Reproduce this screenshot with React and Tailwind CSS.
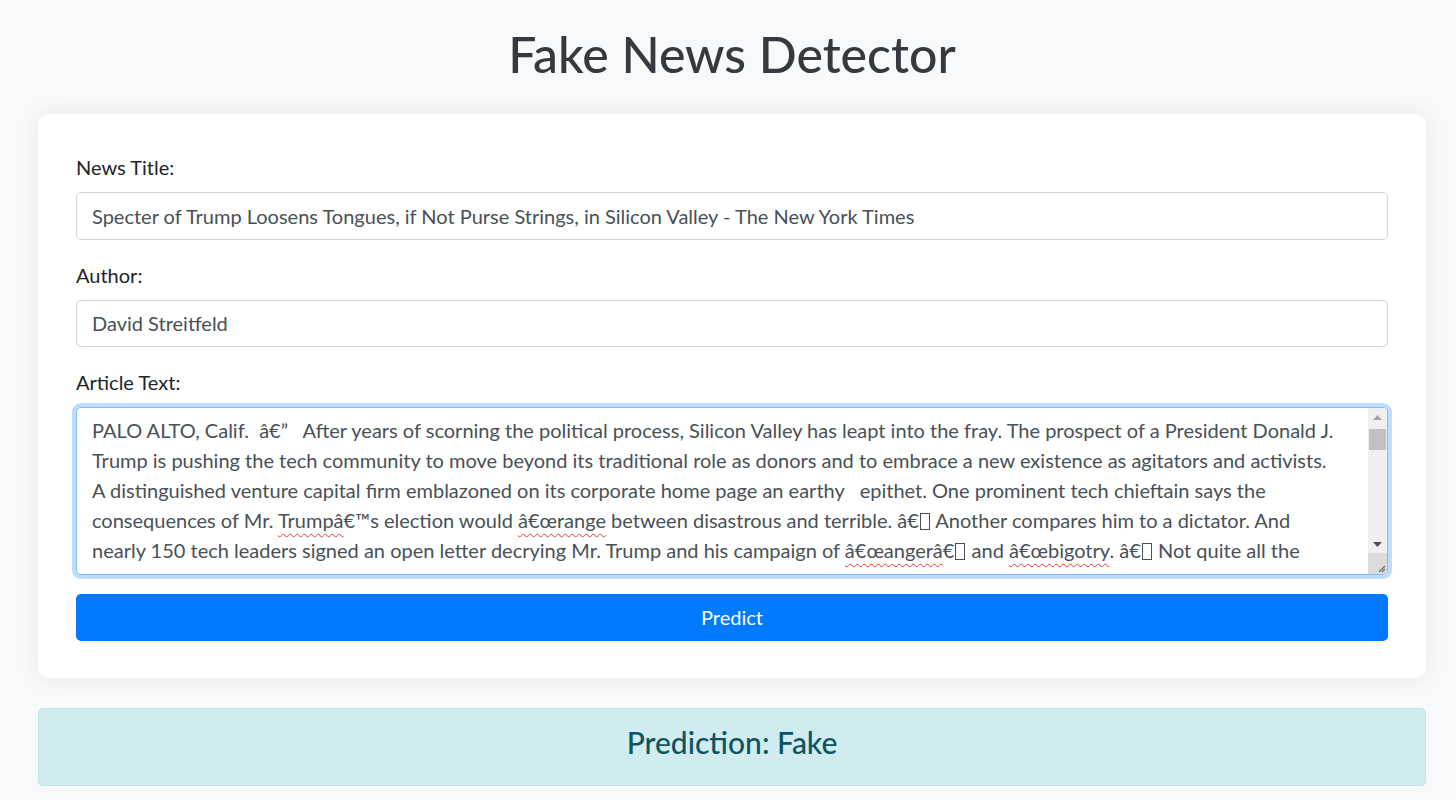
import React from "react";

const Squig = ({ children }) => (
  <span className="underline decoration-wavy decoration-[#e53935] decoration-1 underline-offset-[5px]">{children}</span>
);

const Tofu = () => (
  <span className="inline-block w-[10px] h-[17px] border border-[#495057] align-[-2px] mx-[1px]" />
);

export default function App() {
  return (
    <div className="min-h-screen bg-[#f8f9fa] pl-[38px] pr-[30px] pt-[24px] pb-[20px] text-[20px] text-[#212529] [font-family:Lato,'Open_Sans',sans-serif]">
      <h1 className="text-center text-[50px] leading-[60px] font-medium text-[#343a40] mb-[30px]">Fake News Detector</h1>

      <div className="bg-white rounded-[10px] shadow-[0_0_22px_rgba(0,0,0,0.07)] pl-[38px] pr-[38px] pt-[38px] pb-[37px]">
        <div className="mb-[20px]">
          <div className="leading-[30px] mb-[10px]">News Title:</div>
          <div className="h-[47.5px] border border-[#ced4da] rounded-[5px] px-[15px] flex items-center text-[#495057] bg-white">
            Specter of Trump Loosens Tongues, if Not Purse Strings, in Silicon Valley - The New York Times
          </div>
        </div>
        <div className="mb-[20px]">
          <div className="leading-[30px] mb-[10px]">Author:</div>
          <div className="h-[47.5px] border border-[#ced4da] rounded-[5px] px-[15px] flex items-center text-[#495057] bg-white">
            David Streitfeld
          </div>
        </div>
        <div className="mb-[19.5px]">
          <div className="leading-[30px] mb-[10px]">Article Text:</div>
          <div className="h-[167.5px] border border-[#80bdff] rounded-[5px] shadow-[0_0_0_4px_rgba(0,123,255,0.25)] bg-white flex overflow-hidden">
            <div className="flex-1 pl-[15px] pt-[7px] text-[#495057] leading-[30px] overflow-hidden whitespace-pre">
              <div>PALO ALTO, Calif.  â€”   After years of scorning the political process, Silicon Valley has leapt into the fray. The prospect of a President Donald J.</div>
              <div>Trump is pushing the tech community to move beyond its traditional role as donors and to embrace a new existence as agitators and activists.</div>
              <div>A distinguished venture capital firm emblazoned on its corporate home page an earthy   epithet. One prominent tech chieftain says the</div>
              <div>consequences of Mr. <Squig>Trumpâ</Squig>€™s election would <Squig>â€œrange</Squig> between disastrous and terrible. â€<Tofu /> Another compares him to a dictator. And</div>
              <div>nearly 150 tech leaders signed an open letter decrying Mr. Trump and his campaign of <Squig>â€œangerâ</Squig>€<Tofu /> and <Squig>â€œbigotry</Squig>. â€<Tofu /> Not quite all the</div>
              <div>tech world is united against Mr. Trump. Peter Thiel, the venture capitalist and PayPal founder, spoke at the Republican convention.</div>
            </div>
            <div className="w-[19px] bg-[#f0f0f0] flex flex-col shrink-0">
              <div className="h-[19px] flex items-center justify-center">
                <svg width="9" height="5" viewBox="0 0 9 5"><path d="M4.5 0L9 5H0z" fill="#a3a3a3" /></svg>
              </div>
              <div className="h-[21px] mt-[2px] mx-[1px] bg-[#c1c1c1]" />
              <div className="flex-1" />
              <div className="h-[17px] flex items-center justify-center">
                <svg width="9" height="5" viewBox="0 0 9 5"><path d="M0 0H9L4.5 5z" fill="#505050" /></svg>
              </div>
              <div className="h-[21px] bg-[#dcdcdc] flex items-end justify-end pr-[1px] pb-[1px]">
                <svg width="10" height="10" viewBox="0 0 10 10"><path d="M9 3L3 9M9 6L6 9" stroke="#6b6b6b" strokeWidth="1.2" /></svg>
              </div>
            </div>
          </div>
        </div>
        <button className="w-full h-[46.5px] bg-[#007bff] rounded-[5px] text-white text-[20px] leading-[30px]">Predict</button>
      </div>

      <div className="mt-[30px] bg-[#d1ecf1] border border-[#bee5eb] rounded-[5px] pt-[15px] pb-[15px] text-center">
        <h4 className="text-[30px] leading-[36px] font-medium text-[#0c5460] mb-[10px]">Prediction: Fake</h4>
      </div>
    </div>
  );
}
